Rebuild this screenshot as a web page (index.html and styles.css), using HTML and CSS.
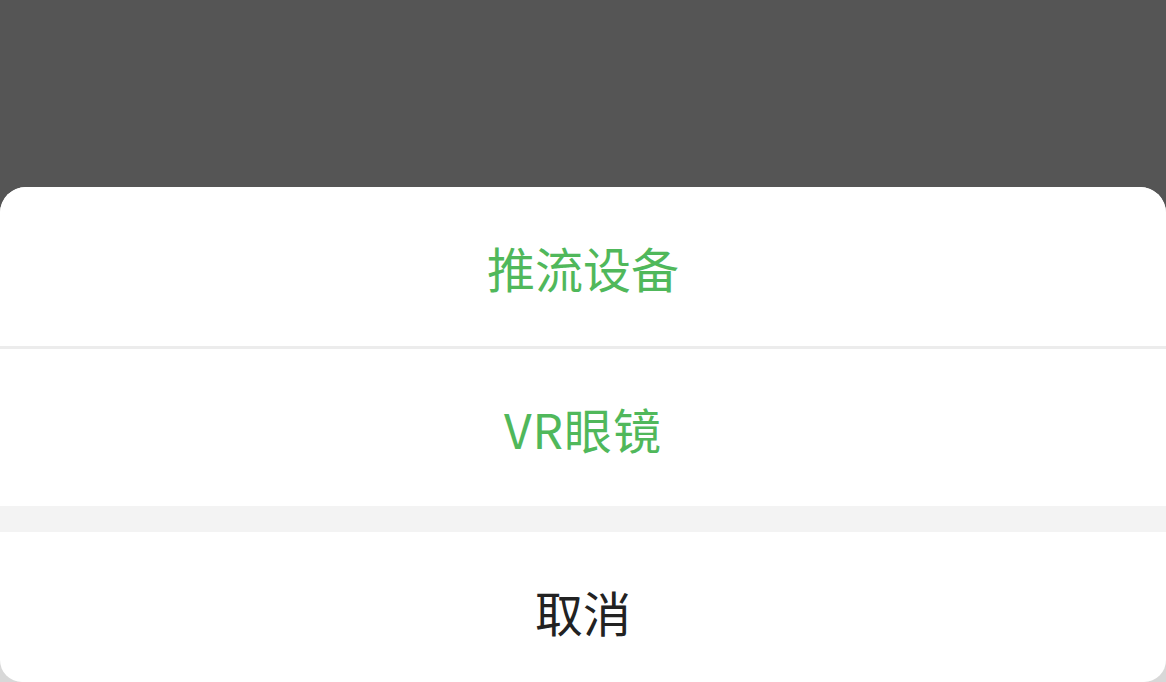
FILE: index.html
```html
<!DOCTYPE html>
<html lang="zh-CN">
<head>
  <meta charset="UTF-8">
  <meta name="viewport" content="width=device-width, initial-scale=1.0">
  <title>Action Sheet</title>
  <link rel="stylesheet" href="styles.css">
</head>
<body>

  <div class="screen">
    <div class="mask"></div>

    <div class="sheet">
      <button class="sheet-item green">推流设备</button>
      <div class="divider"></div>
      <button class="sheet-item green second">VR眼镜</button>
      <div class="gap"></div>
      <div class="cancel-wrap">
        <button class="sheet-item cancel">取消</button>
      </div>
    </div>
  </div>

</body>
</html>
```

FILE: styles.css
```css
* {
  margin: 0;
  padding: 0;
  box-sizing: border-box;
}

body {
  font-family: "Noto Sans CJK SC", "Noto Sans", sans-serif;
  background-color: #555555;
  overflow: hidden;
}

.screen {
  width: 1166px;
  height: 682px;
  display: flex;
  flex-direction: column;
}

.mask {
  height: 187px;
  background: #555555;
}

.sheet {
  flex: 1;
  display: flex;
  flex-direction: column;
  background: #fff;
  border-radius: 26px 26px 0 0;
  overflow: hidden;
}

.sheet-item {
  display: flex;
  align-items: center;
  justify-content: center;
  width: 100%;
  height: 159px;
  border: none;
  background: #fff;
  font-family: inherit;
  font-size: 48px;
  font-weight: 400;
  cursor: pointer;
}

.sheet-item.second {
  height: 157px;
  letter-spacing: 1px;
}

.green {
  color: #50b85b;
}

.divider {
  height: 3px;
  background: #ececec;
}

.gap {
  height: 26px;
  background: #f3f3f3;
}

.cancel-wrap {
  flex: 1;
  display: flex;
  background: #d8d8d8;
}

.cancel {
  flex: 1;
  height: auto;
  padding-top: 8px;
  color: #222;
  border-radius: 0 0 22px 22px;
}
```
